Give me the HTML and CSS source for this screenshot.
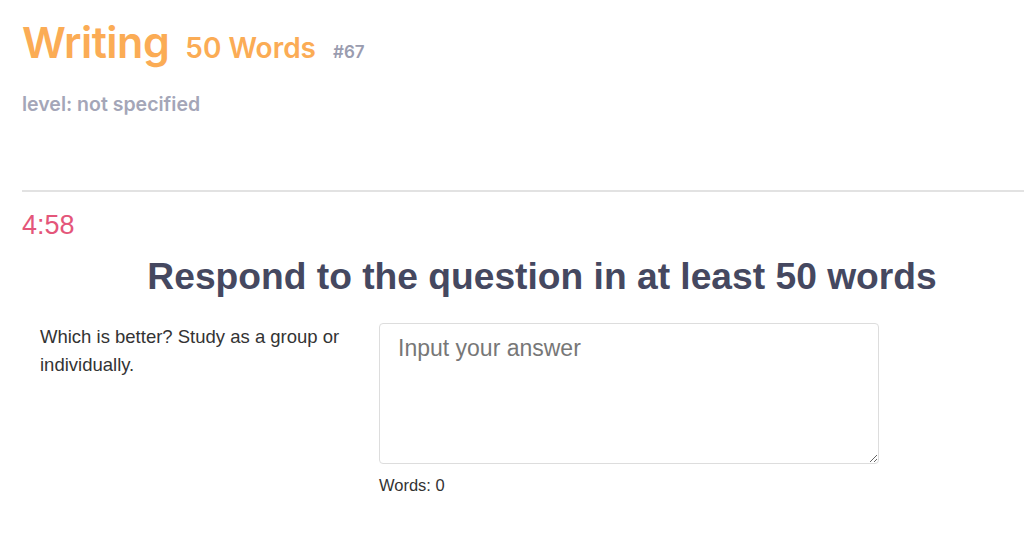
FILE: index.html
```html
<!DOCTYPE html>
<html lang="en">

<head>
    <meta charset="UTF-8">
    <meta name="viewport" content="width=device-width, initial-scale=1.0">
    <title>Writing - 50 Words #67</title>
    <link rel="stylesheet" href="styles.css">
</head>

<body>
    <div class="page">
        <header class="test-header">
            <h1 class="title">
                <span class="title-main">Writing</span>
                <span class="title-sub">50 Words</span>
                <span class="title-id">#67</span>
            </h1>
            <p class="level">level: not specified</p>
        </header>

        <hr class="divider">

        <div class="timer">4:58</div>

        <h2 class="instruction">Respond to the question in at least 50 words</h2>

        <div class="question-row">
            <div class="question">Which is better? Study as a group or individually.</div>
            <div class="answer">
                <textarea class="answer-box" placeholder="Input your answer"></textarea>
                <div class="word-count">Words: 0</div>
            </div>
        </div>
    </div>
</body>

</html>
```

FILE: styles.css
```css
* {
    margin: 0;
    padding: 0;
    box-sizing: border-box;
}

body,
html {
    height: 100%;
    overflow: hidden;
    background: #fff;
    font-family: "Liberation Sans", Arial, sans-serif;
    color: #333;
}

.page {
    padding-left: 22px;
    width: 1062px;
}

.test-header {
    font-family: Inter, Roboto, sans-serif;
    padding-top: 17px;
    height: 190px;
}

.title {
    display: flex;
    align-items: baseline;
    font-weight: 600;
    line-height: 1.2;
}

.title-main {
    font-size: 43px;
    color: #fbac55;
    letter-spacing: -0.5px;
}

.title-sub {
    font-size: 28px;
    color: #fbac55;
    margin-left: 16px;
}

.title-id {
    font-size: 17px;
    color: #9a9caf;
    margin-left: 17px;
}

.level {
    margin-top: 23px;
    font-size: 19.5px;
    font-weight: 600;
    color: #a4a6b8;
}

.divider {
    border: 0;
    border-top: 2px solid #e2e2e2;
}

.timer {
    margin-top: 20px;
    font-size: 27px;
    color: #e4567a;
    line-height: 1;
}

.instruction {
    margin-top: 15px;
    text-align: center;
    font-size: 37.2px;
    font-weight: 700;
    color: #454860;
    line-height: 1.2;
}

.question-row {
    display: flex;
    margin-top: 24px;
}

.question {
    width: 357px;
    padding: 0 18px;
    font-size: 18.5px;
    line-height: 28px;
    color: #333;
}

.answer {
    width: 500px;
}

.answer-box {
    display: block;
    width: 100%;
    height: 141px;
    border: 1px solid #ddd;
    border-radius: 4px;
    padding: 11px 18px;
    font-family: "Liberation Sans", Arial, sans-serif;
    font-size: 23px;
    color: #555;
    resize: vertical;
}

.answer-box::placeholder {
    color: #777;
}

.word-count {
    margin-top: 12px;
    font-size: 16.5px;
    color: #333;
}
```
